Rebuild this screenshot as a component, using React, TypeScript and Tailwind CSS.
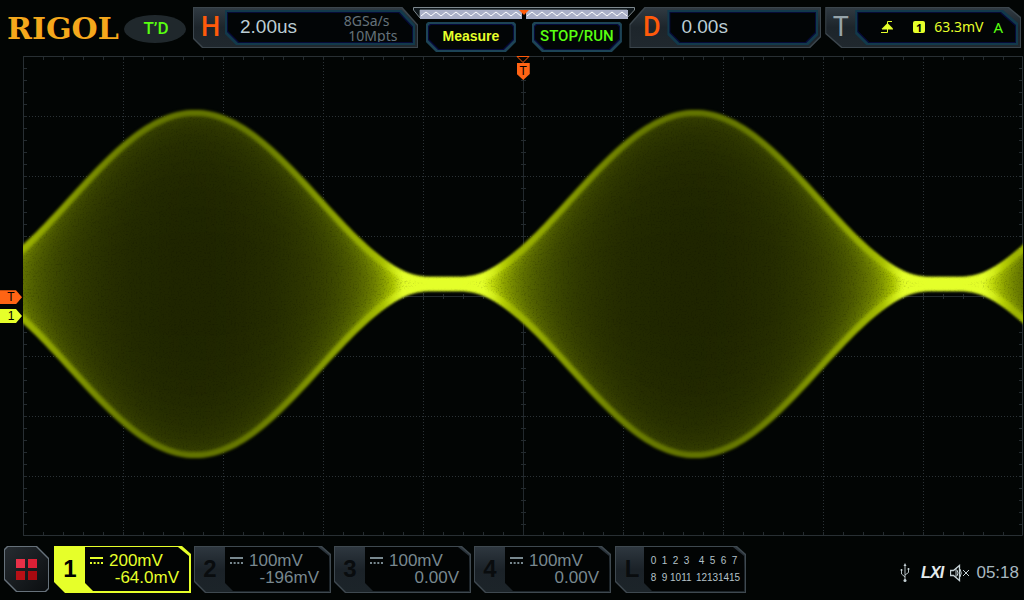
import React from "react";

const PLOT_W = 1000;
const PLOT_H = 480;
const CENTER = 228;

/* ---------- waveform model: amplitude modulated carrier ---------- */

const amplitude = (x: number) => {
  const envelope = 87 + 88 * Math.cos((2 * Math.PI * (x - 172)) / 500);
  return Math.sqrt(envelope * envelope + 49);
};

const phosphor = (level: number) => {
  const b = Math.min(1, Math.max(0, level));
  const r = Math.round(228 * b * (0.92 + 0.08 * b));
  const g = Math.round(255 * b);
  const bl = Math.round(42 * Math.max(0, (b - 0.8) / 0.2));
  return `rgb(${r},${g},${bl})`;
};

const bodyLevel = (x: number, v: number) =>
  0.145 * Math.pow(174 / amplitude(x), 0.74) * Math.pow(1 - v * v, -0.24);

const edgeLevel = (x: number) => {
  const a = amplitude(x);
  const near = Math.max(0, 1 - (a - 7) / 20);
  return Math.min(1, 0.46 + 0.32 * Math.pow(1 - Math.min(1, a / 175), 1.2) + 0.35 * near);
};

const samples = Array.from({ length: 257 }, (_, i) => -12 + i * 4);

const bodyPath = (scale: number) => {
  const top = samples.map((x) => `${x} ${(CENTER - amplitude(x) * scale).toFixed(1)}`);
  const bottom = samples.map((x) => `${x} ${(CENTER + amplitude(x) * scale).toFixed(1)}`).reverse();
  return `M${top.join("L")}L${bottom.join("L")}Z`;
};

const edgePath = (sign: number) =>
  "M" +
  samples
    .map((x) => `${x} ${(CENTER + sign * Math.max(2, amplitude(x) - 4)).toFixed(1)}`)
    .join("L");

const layers = [0.985, 0.96, 0.93, 0.9, 0.86, 0.82, 0.77, 0.71, 0.64, 0.55, 0.44, 0.3];
const stops = Array.from({ length: 101 }, (_, i) => i * 10);

function Waveform() {
  return (
    <g clipPath="url(#plotClip)">
      <g filter="url(#beam)">
        {layers.map((v, i) => (
          <path key={v} d={bodyPath(v)} fill={`url(#body${i})`} />
        ))}
      </g>
      <g filter="url(#glow)" fill="none" stroke="url(#edge)">
        <path d={edgePath(-1)} strokeWidth="6" />
        <path d={edgePath(1)} strokeWidth="6" />
      </g>
    </g>
  );
}

function Graticule() {
  const cols = Array.from({ length: 51 }, (_, i) => i * 20 + 0.5);
  const rows = Array.from({ length: 41 }, (_, i) => i * 12 + 0.5);
  const xTicks = cols.map((x) => `M${x} 0V4M${x} 238V243M${x} 476V480`).join("");
  const yTicks = rows.map((y) => `M0 ${y}H4M498 ${y}H503M996 ${y}H1000`).join("");
  const majorV = [1, 2, 3, 4, 6, 7, 8, 9].map((n) => `M${n * 100 + 0.5} 0V480`).join("");
  const majorH = [1, 2, 3, 5, 6, 7].map((n) => `M0 ${n * 60 + 0.5}H1000`).join("");
  return (
    <g fill="none" strokeWidth="1">
      <path d={majorV + majorH} stroke="#2b3236" strokeDasharray="1 2" />
      <path d={xTicks + yTicks} stroke="#242b2f" />
      <path d="M500.5 0V480M0 240.5H1000" stroke="#22292d" />
      <path d="M0.5 0.5H999.5V479.5H0.5Z" stroke="#282f33" />
    </g>
  );
}

function Scope() {
  return (
    <svg
      viewBox={`0 0 ${PLOT_W} ${PLOT_H}`}
      className="block aspect-[1000/480] w-full"
      role="img"
      aria-label="Channel 1 waveform"
    >
      <defs>
        <clipPath id="plotClip">
          <rect width={PLOT_W} height={PLOT_H} />
        </clipPath>
        {layers.map((v, i) => (
          <linearGradient key={v} id={`body${i}`} gradientUnits="userSpaceOnUse" x1="0" x2="1000">
            {stops.map((x) => (
              <stop key={x} offset={x / 1000} stopColor={phosphor(bodyLevel(x, layers[i + 1] ?? 0))} />
            ))}
          </linearGradient>
        ))}
        <linearGradient id="edge" gradientUnits="userSpaceOnUse" x1="0" x2="1000">
          {stops.map((x) => (
            <stop key={x} offset={x / 1000} stopColor={phosphor(edgeLevel(x))} />
          ))}
        </linearGradient>
        <filter id="beam" filterUnits="userSpaceOnUse" x="-20" y="0" width="1040" height="480" colorInterpolationFilters="sRGB">
          <feGaussianBlur stdDeviation="1.8" result="soft" />
          <feTurbulence type="fractalNoise" baseFrequency="0.6" numOctaves="2" seed="4" result="noise" />
          <feColorMatrix in="noise" type="matrix" values="0.5 0 0 0 0.75  0.5 0 0 0 0.75  0.5 0 0 0 0.75  0 0 0 0 1" result="grain" />
          <feComposite in="soft" in2="grain" operator="arithmetic" k1="1" k2="0" k3="0" k4="0" />
        </filter>
        <filter id="glow" filterUnits="userSpaceOnUse" x="-20" y="0" width="1040" height="480" colorInterpolationFilters="sRGB">
          <feGaussianBlur stdDeviation="1.8" />
        </filter>
      </defs>
      <Graticule />
      <Waveform />
    </svg>
  );
}

/* ---------- header ---------- */

type ReadoutProps = {
  letter: string;
  label: string;
  outer: string;
  inner: string;
  letterClass: string;
  className: string;
  children: React.ReactNode;
};

function Readout({ letter, label, outer, inner, letterClass, className, children }: ReadoutProps) {
  return (
    <section aria-label={label} className={`h-[41px] min-w-0 bg-[#3c464d] p-px ${outer} ${className}`}>
      <div className={`flex h-full bg-linear-to-b from-[#303a42] via-[#1d252b] to-[#20282e] py-0.5 pr-0.5 ${outer}`}>
        <div className={`flex shrink-0 items-center justify-center font-['Roboto',sans-serif] text-[27px] leading-none ${letterClass}`}>
          {letter}
        </div>
        <div className={`min-w-0 flex-1 bg-[#12394b] p-0.5 ${inner}`}>
          <div className={`h-full bg-[#070b38] p-px ${inner}`}>
            <div className={`flex h-full items-center bg-[#020506] ${inner}`}>{children}</div>
          </div>
        </div>
      </div>
    </section>
  );
}

function HeaderButton({ children, className }: { children: React.ReactNode; className: string }) {
  const shape =
    "[clip-path:polygon(2px_0,calc(100%-2px)_0,100%_2px,100%_calc(100%-10px),calc(100%-10px)_100%,10px_100%,0_calc(100%-10px),0_2px)]";
  return (
    <button type="button" className={`h-[30px] w-[90px] bg-[#1d4456] p-0.5 ${shape}`}>
      <span className={`block h-full bg-[#06093a] p-px ${shape}`}>
        <span className={`flex h-full items-center justify-center bg-[#020506] pb-0.5 leading-none ${shape} ${className}`}>
          {children}
        </span>
      </span>
    </button>
  );
}

function MemoryBar() {
  const zig = (from: number, to: number) => {
    let d = `M${from} 9`;
    for (let x = from + 5, up = true; x <= to; x += 5, up = !up) d += `L${x} ${up ? 5 : 9}`;
    return d;
  };
  return (
    <svg viewBox="0 0 222 12" className="block h-3 w-[222px] shrink-0" aria-hidden="true">
      <path d="M0.5 0.5H221.5V3L214 11V3H7V11L0.5 3Z" fill="#10181c" stroke="#7d888e" strokeWidth="1" />
      <rect x="7" y="3" width="208" height="9" fill="#aab0c8" />
      <path d={zig(8, 108)} fill="none" stroke="#fff" />
      <path d={zig(114, 214)} fill="none" stroke="#fff" />
      <rect x="109" y="6" width="4" height="6" fill="#000" />
      <path d="M106 3H116L111 8Z" fill="#ff5a0a" />
    </svg>
  );
}

function Header() {
  return (
    <header className="flex h-14 items-start pt-[7px] pr-[3px]">
      <h1 className="w-[124px] shrink-0 pt-1 pl-[7px] font-['DejaVu_Serif',serif] text-[30px] leading-9 font-bold text-[#f5a81c]">
        RIGOL
      </h1>
      <div className="mt-2 mr-[7px] flex h-7 w-[62px] shrink-0 items-center justify-center rounded-[50%] bg-[#20282c] pl-0.5 font-['Roboto',sans-serif] text-[17px] font-medium text-[#58ff10]">
        T’D
      </div>
      <Readout
        letter="H"
        label="Horizontal"
        className="flex-[226]"
        letterClass="w-[31px] pl-0.5 font-medium text-[#ff5a0a]"
        outer="[clip-path:polygon(0_0,calc(100%-16px)_0,100%_18px,100%_100%,9px_100%,0_calc(100%-9px))]"
        inner="[clip-path:polygon(0_0,calc(100%-14px)_0,100%_15px,100%_100%,11px_100%,0_calc(100%-11px))]"
      >
        <span className="pl-3 text-[19px] text-[#bccdd4]">2.00us</span>
        <span className="ml-auto pr-[15px] font-['Noto_Sans',sans-serif] text-sm leading-[15px] text-[#65727a]">
          <span className="block pr-2 text-right">8GSa/s</span>
          <span className="block text-right">10Mpts</span>
        </span>
      </Readout>
      <div className="flex w-[211px] shrink-0 flex-col items-center gap-[3px]">
        <MemoryBar />
        <div className="flex gap-4">
          <HeaderButton className="text-sm font-bold text-[#e6ff2a]">Measure</HeaderButton>
          <HeaderButton className="font-['Roboto',sans-serif] text-[15px] font-medium text-[#58ff10]">STOP/RUN</HeaderButton>
        </div>
      </div>
      <Readout
        letter="D"
        label="Delay"
        className="flex-[192]"
        letterClass="w-[37px] pl-1.5 font-medium text-[#ff5a0a]"
        outer="[clip-path:polygon(15px_0,100%_0,100%_calc(100%-11px),calc(100%-11px)_100%,0_100%,0_17px)]"
        inner="[clip-path:polygon(0_0,100%_0,100%_calc(100%-10px),calc(100%-10px)_100%,10px_100%,0_calc(100%-10px))]"
      >
        <span className="pl-[11px] text-[19px] text-[#bccdd4]">0.00s</span>
      </Readout>
      <Readout
        letter="T"
        label="Trigger"
        className="ml-1 flex-[196]"
        letterClass="w-[29px] text-[#96a4aa]"
        outer="[clip-path:polygon(0_0,calc(100%-12px)_0,100%_10px,100%_100%,16px_100%,0_calc(100%-14px))]"
        inner="[clip-path:polygon(0_0,calc(100%-15px)_0,100%_13px,100%_100%,11px_100%,0_calc(100%-11px))]"
      >
        <div className="flex flex-1 items-center justify-end pr-3 font-['Noto_Sans',sans-serif] text-sm text-[#e6ff2a]">
          <svg viewBox="0 0 12 14" className="mr-5 h-3.5 w-3" aria-label="Rising edge">
            <path d="M0 12.5H6.5V1.5H11" fill="none" stroke="currentColor" />
            <path d="M6.5 3L12 8.5V9.5H1V8.5Z" fill="currentColor" />
          </svg>
          <span className="mr-[9px] flex h-3 w-3 items-center justify-center rounded-xs bg-[#e6ff2a] text-[11px] font-bold text-black">
            1
          </span>
          <span className="mr-2.5">63.3mV</span>
          <span className="text-[15px] text-[#58ff10]">A</span>
        </div>
      </Readout>
    </header>
  );
}

/* ---------- footer ---------- */

const channelShape =
  "[clip-path:polygon(0_0,calc(100%-9px)_0,100%_8px,100%_100%,11px_100%,0_calc(100%-11px))]";
const channelInner =
  "[clip-path:polygon(0_0,calc(100%-11px)_0,100%_9px,100%_100%,8px_100%,0_calc(100%-8px))]";

function DcCoupling() {
  return (
    <svg viewBox="0 0 13 8" className="mt-[5px] h-2 w-[13px] shrink-0" aria-label="DC coupling">
      <path d="M0 1H13" stroke="currentColor" strokeWidth="2" />
      <path d="M0 6H13" stroke="currentColor" strokeWidth="2" strokeDasharray="2 1.66" />
    </svg>
  );
}

function Channel({ id, scale, offset, active }: { id: string; scale: string; offset: string; active?: boolean }) {
  return (
    <button
      type="button"
      aria-pressed={!!active}
      className={`h-[47px] w-[137px] p-px text-left ${channelShape} ${active ? "bg-[#e6ff2a]" : "bg-[#3f4950]"}`}
    >
      <span
        className={`flex h-full pr-px pb-px ${channelShape} ${
          active ? "bg-[#e6ff2a]" : "bg-linear-to-b from-[#2e373f] via-[#1b2228] to-[#1c2429]"
        }`}
      >
        <span className={`flex w-[30px] shrink-0 items-center justify-center text-2xl font-bold ${active ? "text-black" : "text-[#090c0e]"}`}>
          {id}
        </span>
        <span
          className={`flex min-w-0 flex-1 gap-1.5 bg-[#020404] pt-[5px] pl-[5px] ${channelInner} ${
            active ? "text-[#e6ff2a]" : "text-[#78888f]"
          }`}
        >
          <DcCoupling />
          <span className="flex-1 pr-2.5 text-[17px] leading-[17px]">
            <span className="block">{scale}</span>
            <span className="block text-right">{offset}</span>
          </span>
        </span>
      </span>
    </button>
  );
}

function LogicPanel() {
  const rows = [
    ["0", "1", "2", "3", "4", "5", "6", "7"],
    ["8", "9", "10", "11", "12", "13", "14", "15"],
  ];
  return (
    <button type="button" aria-label="Logic channels" className={`ml-px h-[47px] w-[131px] bg-[#3f4950] p-px ${channelShape}`}>
      <span className={`flex h-full bg-linear-to-b from-[#2e373f] via-[#1b2228] to-[#1c2429] pr-px pb-px ${channelShape}`}>
        <span className="flex w-7 shrink-0 items-center justify-center pl-1 text-2xl font-bold text-[#090c0e]">L</span>
        <span className={`flex min-w-0 flex-1 flex-col justify-center gap-[5px] bg-[#020404] pl-1 ${channelInner}`}>
          {rows.map((row) => (
            <span
              key={row[0]}
              className="grid grid-cols-[repeat(4,11px)_4px_repeat(4,11px)] justify-items-center text-[10px] leading-3 text-[#b4c2c8]"
            >
              {row.map((n, i) => (
                <span key={n} className={i === 4 ? "col-start-6" : ""}>
                  {n}
                </span>
              ))}
            </span>
          ))}
        </span>
      </span>
    </button>
  );
}

function MenuButton() {
  const shape =
    "[clip-path:polygon(3px_0,calc(100%-12px)_0,100%_12px,100%_calc(100%-3px),calc(100%-3px)_100%,12px_100%,0_calc(100%-12px),0_3px)]";
  return (
    <button type="button" aria-label="Menu" className={`mr-[5px] h-[46px] w-[45px] bg-[#66717a] p-px ${shape}`}>
      <span className={`flex h-full items-center justify-center bg-linear-to-br from-[#262c31] to-[#0b0e10] ${shape}`}>
        <span className="grid grid-cols-2 gap-[3px]">
          <span className="h-[9px] w-[9px] bg-[#e83048]" />
          <span className="h-[9px] w-[9px] bg-[#dc2036]" />
          <span className="h-[9px] w-[9px] bg-[#b81016]" />
          <span className="h-[9px] w-[9px] bg-[#a80a10]" />
        </span>
      </span>
    </button>
  );
}

function StatusIcons() {
  return (
    <div className="ml-auto flex items-center self-center text-[#c4d0d4]">
      <svg viewBox="0 0 10 20" className="mr-[11px] h-5 w-2.5" fill="none" stroke="currentColor" aria-label="USB">
        <path d="M5 2V17M5 14L1.5 11V7.5M5 12L8.5 9.5V6" strokeWidth="0.9" />
        <path d="M5 0L6.5 3H3.5ZM0.7 6H2.3V8H0.7ZM7.7 5H9.3V7H7.7Z" fill="currentColor" stroke="none" />
        <circle cx="5" cy="17.5" r="1.5" fill="currentColor" stroke="none" />
      </svg>
      <span className="mr-[7px] text-base font-bold tracking-tighter text-[#e4eaec] italic">LXI</span>
      <svg viewBox="0 0 20 18" className="mr-1.5 h-[18px] w-5" fill="none" stroke="currentColor" aria-label="Muted">
        <path d="M0.5 6.5H3.5L9.5 1.5V16.5L3.5 11.5H0.5Z" strokeWidth="1.3" />
        <path d="M6 4.5V13.5M7 6Q9 9 7 12M10 5Q12.5 9 10 13" />
        <path d="M13 6L19 12M19 6L13 12" />
      </svg>
      <time className="text-[17px] text-[#a9b9c0]">05:18</time>
    </div>
  );
}

function Footer() {
  return (
    <footer className="flex h-16 items-start pt-2.5 pr-[5px] pl-1">
      <MenuButton />
      <div className="flex gap-[3px]">
        <Channel id="1" scale="200mV" offset="-64.0mV" active />
        <Channel id="2" scale="100mV" offset="-196mV" />
        <Channel id="3" scale="100mV" offset="0.00V" />
        <Channel id="4" scale="100mV" offset="0.00V" />
        <LogicPanel />
      </div>
      <StatusIcons />
    </footer>
  );
}

/* ---------- page ---------- */

function LevelMarker({ label, className }: { label: string; className: string }) {
  return (
    <div
      className={`absolute left-0 flex h-3.5 w-[22px] items-center justify-center text-xs leading-none text-black [clip-path:polygon(0_0,calc(100%-6px)_0,100%_50%,calc(100%-6px)_100%,0_100%)] ${className}`}
    >
      {label}
    </div>
  );
}

export default function App() {
  return (
    <div className="min-h-screen bg-[#020504] font-['Liberation_Sans',Arial,sans-serif]">
      <Header />
      <main className="relative pr-px pl-[23px]">
        <Scope />
        <LevelMarker label="T" className="top-[48.8%] bg-[#ff6414]" />
        <LevelMarker label="1" className="top-[52.7%] bg-[#e6ff2a]" />
        <div className="absolute top-0 left-[51.1%] flex -translate-x-1/2 flex-col items-center">
          <svg viewBox="0 0 14 7" className="h-[7px] w-3.5" aria-hidden="true">
            <path d="M1 0.5H13L7 6.5Z" fill="#020504" stroke="#ff5a0a" />
          </svg>
          <div className="flex h-[17px] w-[13px] justify-center bg-[#ff6414] pt-0.5 text-xs leading-none text-black [clip-path:polygon(0_0,100%_0,100%_11px,50%_100%,0_11px)]">
            T
          </div>
        </div>
      </main>
      <Footer />
    </div>
  );
}
